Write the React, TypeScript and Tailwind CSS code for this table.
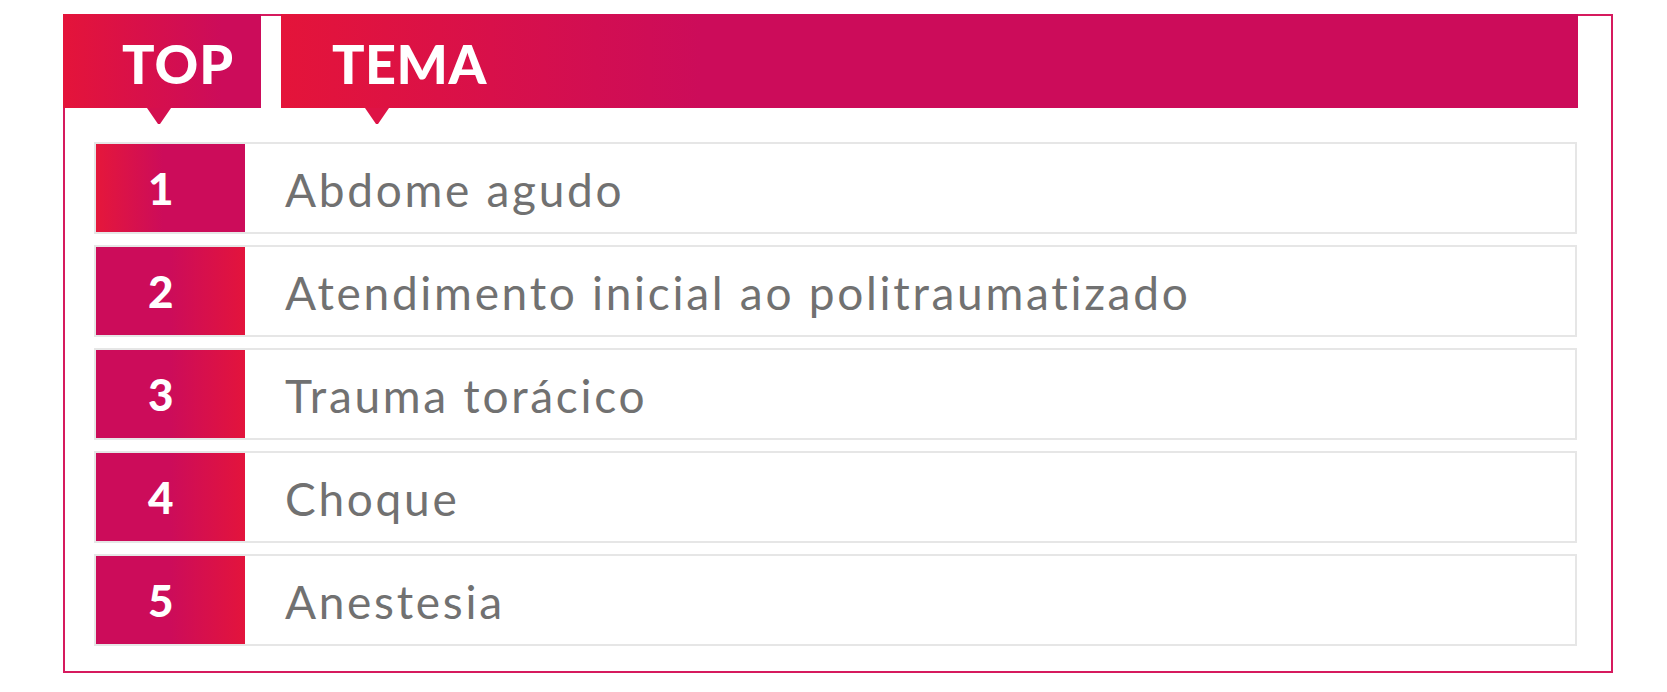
import React from "react";

const rows = [
  "Abdome agudo",
  "Atendimento inicial ao politraumatizado",
  "Trauma torácico",
  "Choque",
  "Anestesia",
];

function Triangle({ color }: { color: string }) {
  return (
    <svg
      className="absolute left-[84px] top-full"
      width="24"
      height="17"
      viewBox="0 0 24 17"
    >
      <polygon points="0,0 24,0 13,16 11,16" fill={color} />
    </svg>
  );
}

export default function App() {
  return (
    <div className="min-h-[692px] w-[1667px] bg-white pt-[14px] pl-[63px] font-['Lato',sans-serif]">
      <div className="w-[1550px] border-2 border-[#d61a5e] pb-[25px]">
        {/* header */}
        <div className="-ml-[2px] -mt-[2px] flex h-[94px] gap-[20px]">
          <div className="relative flex w-[198px] items-center bg-[linear-gradient(90deg,#e4143a,#cc0c5a_80%)] pl-[59px] pt-[6px]">
            <span className="text-[54px] font-black leading-none tracking-[1px] text-white">
              TOP
            </span>
            <Triangle color="#d40f4f" />
          </div>
          <div className="relative flex w-[1297px] items-center bg-[linear-gradient(90deg,#e4143a,#cc0c5a_420px)] pl-[51px] pt-[6px]">
            <span className="text-[54px] font-black leading-none tracking-[0.5px] text-white">
              TEMA
            </span>
            <Triangle color="#de1346" />
          </div>
        </div>

        {/* rows */}
        <div className="ml-[29px] mt-[34px] flex w-[1483px] flex-col gap-[11px]">
          {rows.map((t, i) => (
            <div
              key={t}
              className="flex h-[92px] border-2 border-[#e6e6e6] bg-white"
            >
              <div
                className={
                  i === 0
                    ? "flex w-[149px] items-center bg-[linear-gradient(90deg,#e5173b,#cc0c5a_45%)] pl-[52px]"
                    : "flex w-[149px] items-center bg-[linear-gradient(90deg,#cc0c5a_50%,#e3143c)] pl-[52px]"
                }
              >
                <span className="text-[44px] font-black leading-none text-white">
                  {i + 1}
                </span>
              </div>
              <div className="flex flex-1 items-center pl-[40px] pt-[4px]">
                <span className="text-[46px] font-normal leading-none tracking-[2.7px] text-[#717171]">
                  {t}
                </span>
              </div>
            </div>
          ))}
        </div>
      </div>
    </div>
  );
}
